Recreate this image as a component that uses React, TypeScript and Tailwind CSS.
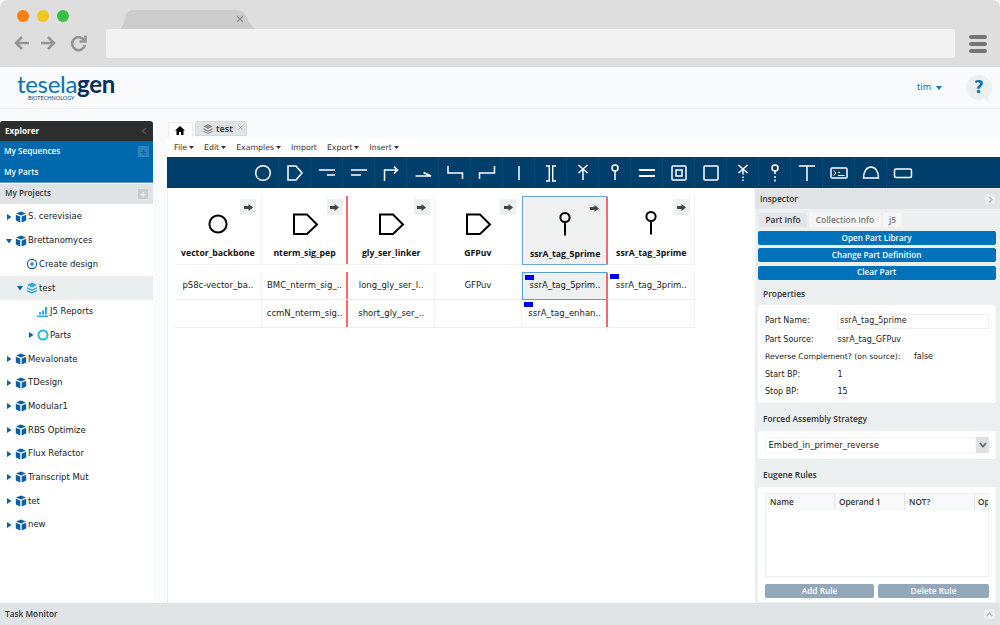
import React from "react";

const F = "font-['DejaVu_Sans',sans-serif]";
const H = "font-['Open_Sans',sans-serif]";

function Cube() {
  return (
    <svg width="12" height="12" viewBox="0 0 12 12" className="shrink-0">
      <path d="M6 0.5 L11 2.5 L6 4.5 L1 2.5 Z" fill="#0b5fa5" />
      <path d="M0.8 3.8 L5.3 5.6 L5.3 11.5 L0.8 9.6 Z" fill="#0b5fa5" />
      <path d="M11.2 3.8 L6.7 5.6 L6.7 11.5 L11.2 9.6 Z" fill="#0b5fa5" />
    </svg>
  );
}

function Caret({ down, color = "#0b5fa5" }: { down?: boolean; color?: string }) {
  return (
    <svg width="6" height="6" viewBox="0 0 6 6" className="shrink-0">
      {down ? <path d="M0 1 H6 L3 5.5 Z" fill={color} /> : <path d="M1 0 V6 L5.5 3 Z" fill={color} />}
    </svg>
  );
}

function TreeRow({ label, icon, indent = 0, caret, selected }: { label: string; icon: React.ReactNode; indent?: number; caret?: "r" | "d"; selected?: boolean }) {
  const pad = indent === 0 ? "pl-[6px]" : indent === 1 ? "pl-[17px]" : "pl-[28px]";
  return (
    <div className={`h-[23.7px] flex items-center ${pad} ${selected ? "bg-[#ebeeef]" : ""}`}>
      <div className="w-[9px] flex items-center">{caret && <Caret down={caret === "d"} />}</div>
      <div className="w-[12px] flex justify-start">{icon}</div>
      <span className="text-[8.5px] text-[#222] ml-[1px]">{label}</span>
    </div>
  );
}

function Ic({ children }: { children: React.ReactNode }) {
  return (
    <div className="w-[32px] h-[31px] flex items-center justify-center border-r border-[#0a4a78] last:border-r-0">
      <svg width="22" height="22" viewBox="0 0 22 22" fill="none" stroke="#fff" strokeWidth="1.5">
        {children}
      </svg>
    </div>
  );
}

const toolbar = [
  <circle cx="11" cy="11" r="7.3" />,
  <path d="M4 4 H12 L18 11 L12 18 H4 Z" />,
  <path d="M3 8 H19 M11 13 H19" strokeWidth="1.6" />,
  <path d="M3 8 H19 M3 13 H13" strokeWidth="1.6" />,
  <path d="M4.5 19 V8 H17 M14 4.5 L17.5 8 L14 11.5" />,
  <path d="M3.5 14 H19 L11.5 10.5" />,
  <path d="M4 4 V11 H18.5 V17" />,
  <path d="M3.5 17 V11 H18.5 V4" />,
  <path d="M11 4 V18" />,
  <path d="M6 4 H9.3 V19 H6 M16 4 H12.7 V19 H16" strokeWidth="1.4" />,
  <path d="M11 18 V8 M6.5 3 L15.5 11 M15.5 3 L6.5 11" />,
  <>
    <circle cx="11" cy="6" r="3" />
    <path d="M11 9 V18" />
  </>,
  <path d="M3 8 H19 M3 14 H19" strokeWidth="2" />,
  <>
    <rect x="4" y="4" width="14" height="14" rx="1" />
    <rect x="8" y="8" width="6" height="6" />
  </>,
  <rect x="4" y="4" width="14" height="14" rx="1" />,
  <path d="M6.5 3 L15.5 11 M15.5 3 L6.5 11 M11 8 V12.5 M11 14.5 V16 M11 17.5 V19" />,
  <>
    <circle cx="11" cy="6" r="3" />
    <path d="M11 9 V12 M11 14 V16 M11 17.5 V19.5" />
  </>,
  <path d="M3 4 H19 M11 4 V19" />,
  <>
    <rect x="3" y="6" width="16" height="10" rx="1" />
    <path d="M5.5 8.5 L8 11 L5.5 13.5 M10 13.5 H16.5 M10 10.5 H12" strokeWidth="1" />
  </>,
  <path d="M3.5 16 C3.5 9 7 5 11 5 C15 5 18.5 9 18.5 16 Z" />,
  <rect x="2.5" y="7" width="17" height="8.5" rx="1.5" />,
];

function Glyph({ kind }: { kind: "circle" | "cds" | "pin" }) {
  return (
    <svg width="30" height="30" viewBox="0 0 30 30" fill="none" stroke="#000" strokeWidth="2">
      {kind === "circle" && <circle cx="15" cy="15" r="8.6" />}
      {kind === "cds" && <path d="M4 5.5 H17 L27 15.5 L17 25 H4 Z" />}
      {kind === "pin" && (
        <>
          <circle cx="15" cy="7.5" r="4.6" />
          <path d="M15 12 V25.5" />
        </>
      )}
    </svg>
  );
}

function Arrow() {
  return (
    <div className="absolute top-[3px] right-[4.5px] w-[16px] h-[16px] bg-[#ecf0f1] flex items-center justify-center">
      <svg width="9" height="7" viewBox="0 0 9 7">
        <path d="M0 2 H4.5 V0 L9 3.5 L4.5 7 V5 H0 Z" fill="#444" />
      </svg>
    </div>
  );
}

function RedLine() {
  return <div className="absolute top-0 bottom-0 right-[-1px] w-[2px] bg-[#f9666c] z-10" />;
}

function HeadCell({ name, kind, sel, red }: { name: string; kind: "circle" | "cds" | "pin"; sel?: boolean; red?: boolean }) {
  return (
    <div className={`relative w-[86.7px] h-[69px] flex flex-col items-center shrink-0 border-r border-r-[#f1f3f4] ${sel ? "bg-[#f0f1f1] border-l border-t border-b border-l-[#69a5d6] border-t-[#69a5d6] border-b-[#69a5d6]" : "bg-white border-b border-b-[#f1f3f4]"}`}>
      {red && <RedLine />}
      <Arrow />
      <div className="h-[49px] flex items-center justify-center pt-[6px]">
        <Glyph kind={kind} />
      </div>
      <span className={`text-[8.7px] leading-[13px] font-bold text-[#111] mt-[2px] ${H}`}>{name}</span>
    </div>
  );
}

function BodyCell({ text, sel, red, flag }: { text?: string; sel?: boolean; red?: boolean; flag?: boolean }) {
  return (
    <div className={`relative w-[86.7px] h-[28px] pb-[1px] shrink-0 flex items-center justify-center border-r border-r-[#f1f3f4] ${sel ? "bg-[#eef1f2] border-l border-t border-b border-l-[#5a9fd4] border-t-[#5a9fd4] border-b-[#5a9fd4]" : "border-b border-b-[#eceff0]"}`}>
      {red && <RedLine />}
      {flag && <div className="absolute left-[2px] top-[2px] w-[9px] h-[5px] bg-[#0000ee]" />}
      <span className="text-[8.5px] text-[#222]">{text}</span>
    </div>
  );
}

function PropRow({ label, value, wide }: { label: string; value: string; wide?: boolean }) {
  return (
    <div className="flex items-center h-[17.5px] text-[8px] text-[#222] whitespace-nowrap">
      <span className={wide ? "w-[149px] text-[7.7px]" : "w-[72.5px]"}>{label}</span>
      <span>{value}</span>
    </div>
  );
}

function BlueBtn({ children }: { children: React.ReactNode }) {
  return (
    <div className={`h-[14px] rounded-[2px] bg-[#0072bc] text-white text-[8.2px] font-semibold flex items-center justify-center mb-[3.3px] ${H}`}>
      {children}
    </div>
  );
}

function SectionTitle({ children, cls }: { children: React.ReactNode; cls: string }) {
  return <div className={`flex items-center pl-[5.5px] text-[8.4px] font-semibold text-[#333] ${H} ${cls}`}>{children}</div>;
}

export default function App() {
  const projects = ["Mevalonate", "TDesign", "Modular1", "RBS Optimize", "Flux Refactor", "Transcript Mut", "tet", "new"];
  return (
    <div className={`w-[1000px] h-[625px] overflow-hidden flex flex-col bg-[#f8fafb] ${F}`}>
      {/* Browser chrome */}
      <div className="h-[67px] shrink-0 bg-[#dedede] rounded-t-[8px] flex flex-col">
        <div className="h-[29px] flex items-start shrink-0">
          <div className="flex gap-[8px] pl-[17px] pt-[10px] w-[120px]">
            <div className="w-[12px] h-[12px] rounded-full bg-[#ff7f0e]" />
            <div className="w-[12px] h-[12px] rounded-full bg-[#f2c81e]" />
            <div className="w-[12px] h-[12px] rounded-full bg-[#37c13f]" />
          </div>
          <div className="relative mt-[10px] w-[136px] h-[19px]">
            <svg width="136" height="19" viewBox="0 0 136 19">
              <path d="M0 19 C2 17 4 13 5 8 C6 3 9 0 14 0 H116 C122 0 125 3 127 8 C129 13 132 17 136 19 Z" fill="#cccccc" />
            </svg>
            <svg width="8" height="8" viewBox="0 0 8 8" stroke="#8e8e8e" strokeWidth="1.1" className="absolute left-[116px] top-[5px]">
              <path d="M1 1 L7 7 M7 1 L1 7" />
            </svg>
          </div>
        </div>
        <div className="flex items-start">
          <div className="w-[106px] pl-[14px] pt-[5px] flex gap-[10px]">
            <svg width="16" height="18" viewBox="0 0 16 18" fill="none" stroke="#949494" strokeWidth="2.6"><path d="M15 9 H2 M8 3 L2 9 L8 15" /></svg>
            <svg width="16" height="18" viewBox="0 0 16 18" fill="none" stroke="#949494" strokeWidth="2.6"><path d="M1 9 H14 M8 3 L14 9 L8 15" /></svg>
            <svg width="17" height="18" viewBox="0 0 17 18" fill="none" stroke="#949494" strokeWidth="2.6" className="ml-[4px]"><path d="M14 6 A6.5 6.5 0 1 0 15 11" /><path d="M15.5 1.5 V7.5 H9.5" /></svg>
          </div>
          <div className="w-[849px] h-[29px] rounded-[3px] bg-[#f2f2f2]" />
          <div className="ml-[14px] mt-[6px] flex flex-col gap-[3px]">
            <div className="w-[18px] h-[4px] rounded-[2px] bg-[#767676]" />
            <div className="w-[18px] h-[4px] rounded-[2px] bg-[#767676]" />
            <div className="w-[18px] h-[4px] rounded-[2px] bg-[#767676]" />
          </div>
        </div>
      </div>

      {/* App header */}
      <div className="h-[42px] shrink-0 bg-[#f8fafc] border-b border-[#eef1f2] flex items-center pl-[17px] pr-[8px]">
        <div className="relative w-[100px] h-[33px]">
          <span className="absolute left-0 top-[4px] font-['Lato',sans-serif] text-[24px] leading-[18px] tracking-[-0.3px]">
            <span className="text-[#0b72b5]">tesela</span>
            <span className="text-[#062f5f] font-bold">gen</span>
          </span>
          <span className="absolute left-[11px] top-[24px] text-[5.5px] leading-[6px] text-[#0b3f75] font-['Lato',sans-serif]">BIOTECHNOLOGY</span>
        </div>
        <div className="ml-auto flex items-center text-[8.5px] text-[#1371b8]">
          <span>tim</span>
          <svg width="6" height="4" viewBox="0 0 6 4" className="ml-[5px]"><path d="M0 0 H6 L3 4 Z" fill="#1371b8" /></svg>
        </div>
        <div className="relative ml-[24px] w-[26px] h-[25px] rounded-full bg-[#ecf0f1] flex items-center justify-center text-[#1371b8] text-[17px] font-bold">
          ?
          <div className="absolute bottom-[-3px] right-[3px] w-0 h-0 border-l-[5px] border-l-transparent border-t-[5px] border-t-[#ecf0f1]" />
        </div>
      </div>

      {/* Body */}
      <div className="flex-1 min-h-0 flex">
        <div className="w-[153px] shrink-0 pt-[12px] flex flex-col">
          <div className={`h-[20px] bg-[#2d2d2d] rounded-t-[3px] flex items-center justify-between pl-[5px] pr-[6px] text-white text-[8.2px] font-bold ${H}`}>
            <span>Explorer</span>
            <svg width="6" height="8" viewBox="0 0 6 8" fill="none" stroke="#555" strokeWidth="1.6"><path d="M5 1 L1.5 4 L5 7" /></svg>
          </div>
          <div className={`h-[42px] bg-[#0069ae] text-white text-[8.2px] font-semibold pl-[4px] pr-[4px] border-b border-[#5e9ccb] ${H}`}>
            <div className="h-[21px] flex items-center justify-between">
              <span>My Sequences</span>
              <div className="w-[11px] h-[11px] bg-[#2b82bd] flex items-center justify-center text-[#0069ae] text-[11px] leading-none font-bold">+</div>
            </div>
            <div className="h-[20px] flex items-center">My Parts</div>
          </div>
          <div className={`h-[20px] mt-[1px] pb-[1px] bg-[#e0e3e6] flex items-center justify-between pl-[5px] pr-[5px] text-[8.2px] font-semibold text-[#333] ${H}`}>
            <span>My Projects</span>
            <div className="w-[10px] h-[10px] bg-[#c8cccf] flex items-center justify-center text-[#eceeef] text-[10px] leading-none font-bold">+</div>
          </div>
          <div className="flex-1 bg-white pt-[1px]">
            <TreeRow label="S. cerevisiae" icon={<Cube />} caret="r" />
            <TreeRow label="Brettanomyces" icon={<Cube />} caret="d" />
            <TreeRow
              label="Create design"
              indent={1}
              icon={
                <svg width="12" height="12" viewBox="0 0 12 12" fill="none" stroke="#0b5fa5" strokeWidth="1.1">
                  <circle cx="6" cy="6" r="4.6" />
                  <path d="M6 3.8 V8.2 M3.8 6 H8.2" />
                </svg>
              }
            />
            <TreeRow
              label="test"
              indent={1}
              caret="d"
              selected
              icon={
                <svg width="12" height="12" viewBox="0 0 12 12" fill="#2ea9e8">
                  <path d="M6 0.5 L11 3 L6 5.5 L1 3 Z" />
                  <path d="M1 5 L6 7.5 L11 5 V6.5 L6 9 L1 6.5 Z" />
                  <path d="M1 8 L6 10 L11 8 V9.5 L6 11.8 L1 9.5 Z" />
                </svg>
              }
            />
            <TreeRow
              label="J5 Reports"
              indent={2}
              icon={
                <svg width="12" height="11" viewBox="0 0 12 11" fill="#2ea9e8">
                  <path d="M0 9.5 H11 V11 H0 Z M2 6 H4 V8.5 H2 Z M5 4.5 H7 V8.5 H5 Z M8 1 H10 V8.5 H8 Z" />
                </svg>
              }
            />
            <TreeRow
              label="Parts"
              indent={2}
              caret="r"
              icon={
                <svg width="12" height="12" viewBox="0 0 12 12" fill="none" stroke="#22b5f0" strokeWidth="2">
                  <circle cx="6" cy="6" r="4.6" />
                </svg>
              }
            />
            {projects.map((p) => (
              <TreeRow key={p} label={p} icon={<Cube />} caret="r" />
            ))}
          </div>
        </div>

        <div className="w-[14px] shrink-0" />

        <div className="flex-1 min-w-0 flex flex-col">
          {/* Tabs */}
          <div className="h-[29px] shrink-0 flex items-end pb-[1px] gap-[2.5px] pl-[1px]">
            <div className="w-[24.5px] h-[15px] bg-white border border-b-0 border-[#e8ebed] rounded-t-[3px] flex items-center justify-center">
              <svg width="10" height="9" viewBox="0 0 10 9"><path d="M5 0 L10 4.5 H8.5 V9 H6 V6 H4 V9 H1.5 V4.5 H0 Z" fill="#000" /></svg>
            </div>
            <div className={`w-[52px] h-[15px] mb-[1px] bg-[#e0e3e6] border border-[#d5d9dc] rounded-t-[3px] flex items-center pl-[7px] text-[9px] font-semibold text-[#333] relative ${H}`}>
              <svg width="10" height="10" viewBox="0 0 10 10" fill="#8a9096" className="mr-[3px]"><path d="M5 0 L9.5 2.5 L5 5 L.5 2.5 Z M.5 4 L5 6.5 L9.5 4 V5.5 L5 8 L.5 5.5 Z M.5 6.8 L5 9 L9.5 6.8 V7.8 L5 10 L.5 7.8 Z" /></svg>
              test
              <svg width="5" height="5" viewBox="0 0 5 5" stroke="#a0a5a9" strokeWidth=".8" className="absolute right-[3px] top-[3px]"><path d="M.5 .5 L4.5 4.5 M4.5 .5 L.5 4.5" /></svg>
            </div>
          </div>
          {/* Menu */}
          <div className="h-[19px] shrink-0 bg-white flex items-center pl-[7px] gap-[10px] text-[7.8px] text-[#333]">
            {[["File", 1], ["Edit", 1], ["Examples", 1], ["Import", 0], ["Export", 1], ["Insert", 1]].map(([m, c]) => (
              <span key={m as string} className="flex items-center">
                {m}
                {c ? <svg width="5" height="3" viewBox="0 0 5 3" className="ml-[2px]"><path d="M0 0 H5 L2.5 3 Z" fill="#333" /></svg> : null}
              </span>
            ))}
          </div>
          {/* Toolbar */}
          <div className="h-[31px] shrink-0 bg-[#003f6c] flex justify-start pl-[80px]">
            {toolbar.map((t, i) => (
              <Ic key={i}>{t}</Ic>
            ))}
          </div>

          <div className="flex-1 min-h-0 flex">
            {/* Canvas */}
            <div className="w-[588px] shrink-0 bg-white pl-[7px] pt-[8px] border-l border-[#eef1f2]">
              <div className="flex">
                <HeadCell name="vector_backbone" kind="circle" />
                <HeadCell name="nterm_sig_pep" kind="cds" red />
                <HeadCell name="gly_ser_linker" kind="cds" />
                <HeadCell name="GFPuv" kind="cds" />
                <HeadCell name="ssrA_tag_5prime" kind="pin" sel red />
                <HeadCell name="ssrA_tag_3prime" kind="pin" />
              </div>
              <div className="flex mt-[7px]">
                <BodyCell text="pS8c-vector_ba.." />
                <BodyCell text="BMC_nterm_sig_.." red />
                <BodyCell text="long_gly_ser_l.." />
                <BodyCell text="GFPuv" />
                <BodyCell text="ssrA_tag_5prim.." sel red flag />
                <BodyCell text="ssrA_tag_3prim.." flag />
              </div>
              <div className="flex">
                <BodyCell />
                <BodyCell text="ccmN_nterm_sig.." red />
                <BodyCell text="short_gly_ser_.." />
                <BodyCell />
                <BodyCell text="ssrA_tag_enhan.." red flag />
                <BodyCell />
              </div>
            </div>

            {/* Inspector */}
            <div className="flex-1 min-w-0 flex flex-col bg-[#ecf0f1] overflow-hidden">
              <div className={`h-[20px] mt-[1px] shrink-0 bg-[#e1e4e6] flex items-center justify-between pl-[5px] pr-[5px] text-[8.3px] font-semibold text-[#333] ${H}`}>
                <span>Inspector</span>
                <div className="w-[10px] h-[10px] bg-[#eceeef] rounded-[2px] flex items-center justify-center">
                  <svg width="5" height="7" viewBox="0 0 5 7" fill="none" stroke="#b5babd" strokeWidth="1.5"><path d="M1 .8 L4 3.5 L1 6.2" /></svg>
                </div>
              </div>
              <div className="pl-[2.5px] pr-[4.3px] pt-[4px]">
                <div className={`flex gap-[2px] pl-[1.5px] mb-[4px] text-[8.4px] h-[14px] font-semibold ${H}`}>
                  <div className="w-[48px] bg-[#e3e6e8] rounded-t-[2px] flex items-center justify-center text-[#333]">Part Info</div>
                  <div className="w-[72px] bg-[#f4f6f7] rounded-t-[2px] flex items-center justify-center text-[#777]">Collection Info</div>
                  <div className="w-[19px] bg-[#f4f6f7] rounded-t-[2px] flex items-center justify-center text-[#777]">j5</div>
                </div>
                <BlueBtn>Open Part Library</BlueBtn>
                <BlueBtn>Change Part Definition</BlueBtn>
                <BlueBtn>Clear Part</BlueBtn>
                <SectionTitle cls="h-[22.4px]">Properties</SectionTitle>
                <div className="bg-white rounded-[3px] pl-[7.5px] pr-[6.7px] pt-[6.5px] pb-[2.5px]">
                  <div className="flex items-center h-[19px] text-[8px] text-[#222]">
                    <span className="w-[72px]">Part Name:</span>
                    <div className="flex-1 h-[15px] border border-[#eceff0] pl-[2px] flex items-center">ssrA_tag_5prime</div>
                  </div>
                  <PropRow label="Part Source:" value="ssrA_tag_GFPuv" />
                  <PropRow label="Reverse Complement? (on source):" value="false" wide />
                  <PropRow label="Start BP:" value="1" />
                  <PropRow label="Stop BP:" value="15" />
                </div>
                <SectionTitle cls="h-[28px] pt-[5px]">Forced Assembly Strategy</SectionTitle>
                <div className="bg-white rounded-[3px] pl-[7.5px] pr-[6.7px] py-[6px]">
                  <div className="flex h-[16px] items-stretch text-[8.5px] text-[#222]">
                    <div className="flex-1 flex items-center pl-[2.5px] border border-[#f4f6f7]">Embed_in_primer_reverse</div>
                    <div className="w-[13px] bg-[#dfe2e4] flex items-center justify-center">
                      <svg width="8" height="6" viewBox="0 0 8 6" fill="none" stroke="#666" strokeWidth="1.8"><path d="M1 1 L4 4.5 L7 1" /></svg>
                    </div>
                  </div>
                </div>
                <SectionTitle cls="h-[27.7px] pt-[4.3px]">Eugene Rules</SectionTitle>
                <div className="bg-white rounded-[3px] pl-[7.5px] pr-[6.7px] pt-[6.3px] pb-[4px]">
                  <div className="h-[84px] border border-[#eceff0] overflow-hidden">
                    <div className={`h-[16px] bg-[#f8f9fa] flex text-[8.2px] font-semibold text-[#333] ${H}`}>
                      <div className="w-[69px] pl-[4px] flex items-center border-r border-[#e3e6e8] shrink-0">Name</div>
                      <div className="w-[70px] pl-[4px] flex items-center border-r border-[#e3e6e8] shrink-0">Operand 1</div>
                      <div className="w-[70px] pl-[4px] flex items-center border-r border-[#e3e6e8] shrink-0">NOT?</div>
                      <div className="w-[14px] pl-[3px] flex items-center shrink-0">Op</div>
                    </div>
                  </div>
                  <div className={`flex gap-[4px] mt-[7px] ${H}`}>
                    <div className="w-[109px] h-[14px] rounded-[2px] bg-[#93a7bb] text-white text-[8.3px] font-semibold flex items-center justify-center">Add Rule</div>
                    <div className="flex-1 h-[14px] rounded-[2px] bg-[#93a7bb] text-white text-[8.3px] font-semibold flex items-center justify-center">Delete Rule</div>
                  </div>
                </div>
              </div>
            </div>
          </div>
        </div>
      </div>

      {/* Task monitor */}
      <div className={`h-[22px] shrink-0 bg-[#e0e4e7] flex items-center justify-between pl-[5px] pr-[5px] text-[8.3px] font-semibold text-[#333] ${H}`}>
        <span>Task Monitor</span>
        <div className="w-[11px] h-[10px] bg-[#eceeef] rounded-[2px] flex items-center justify-center">
          <svg width="7" height="5" viewBox="0 0 7 5" fill="none" stroke="#b5babd" strokeWidth="1.5"><path d="M.8 4 L3.5 1 L6.2 4" /></svg>
        </div>
      </div>
    </div>
  );
}
